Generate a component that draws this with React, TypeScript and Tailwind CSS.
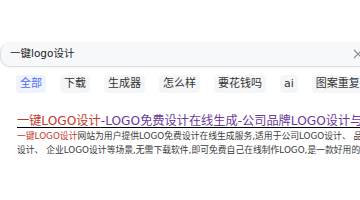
const tabs = ['全部', '下载', '生成器', '怎么样', '要花钱吗', 'ai', '图案重复怎么办']

export default function App() {
  return (
    <div
      className="relative w-[360px] h-[200px] overflow-hidden bg-white"
      style={{ fontFamily: '"DejaVu Sans", "Noto Sans CJK SC", sans-serif' }}
    >
      <div className="h-[42px]" />

      {/* Search bar */}
      <div className="flex items-center h-[25px] w-[380px] rounded-l-[10px] bg-[#f7f8fa] border-b border-l border-[#dcdde0] shadow-[0_1px_2px_rgba(0,0,0,0.04)] pl-[9px]">
        <span className="text-[10.5px] text-[#222]">一键logo设计</span>
        <svg
          className="ml-auto mr-[17px]"
          width="10"
          height="10"
          viewBox="0 0 10 10"
          fill="none"
          stroke="#8a8a8a"
          strokeWidth="1.1"
        >
          <path d="M1 1 L9 9 M9 1 L1 9" />
        </svg>
      </div>

      {/* Tabs */}
      <div className="flex items-center gap-[14px] pl-[16px] mt-[8px] whitespace-nowrap">
        {tabs.map((t, i) => (
          <span
            key={t}
            className={
              i === 0
                ? 'px-[4px] h-[18px] leading-[18px] rounded-[4px] text-[11px] bg-[#eff3fd] text-[#4e6ef2]'
                : 'px-[4px] h-[18px] leading-[18px] rounded-[4px] text-[11px] bg-[#f5f6f7] text-[#333]'
            }
          >
            {t}
          </span>
        ))}
      </div>

      {/* Result */}
      <div className="mt-[21px] pl-[17px] w-[480px]">
        <div className="whitespace-nowrap text-[12.2px] leading-[14px] underline decoration-1 underline-offset-2">
          <span className="text-[#c5392d]">一键LOGO设计</span>
          <span className="text-[#6b3a9e]">-LOGO免费设计在线生成-公司品牌LOGO设计与制作平台</span>
        </div>
        <div className="mt-[1px] text-[8.8px] leading-[14px] text-[#3a3a3a] whitespace-nowrap">
          <div>
            <span className="text-[#c5392d]">一键LOGO设计</span>
            网站为用户提供LOGO免费设计在线生成服务,适用于公司LOGO设计、 品牌LOGO设计、个人LOGO
          </div>
          <div>设计、 企业LOGO设计等场景,无需下载软件,即可免费自己在线制作LOGO,是一款好用的LOGO设计工具。</div>
        </div>
      </div>
    </div>
  )
}
